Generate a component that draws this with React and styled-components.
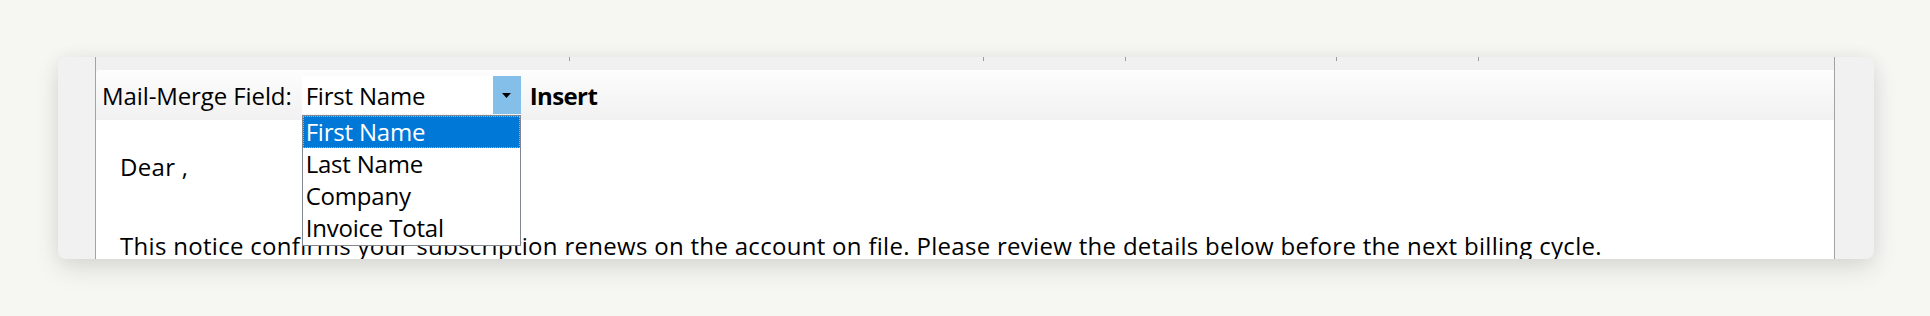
import React from "react";
import styled, { createGlobalStyle } from "styled-components";

const fields = ["First Name", "Last Name", "Company", "Invoice Total"];
const columns = [474, 414, 142, 211, 142];

function Arrow() {
  return (
    <svg width="9" height="5" viewBox="0 0 9 5">
      <path d="M0 0 H9 L4.5 5 Z" fill="#000" />
    </svg>
  );
}

function App() {
  return (
    <>
      <GlobalStyle />
      <Page>
        <Card>
          <Frame>
            <HeaderStrip>
              {columns.map((w, i) => (
                <Column key={i} $width={w} />
              ))}
            </HeaderStrip>
            <Toolbar>
              <Label>Mail-Merge Field:</Label>
              <Select>
                <SelectValue>First Name</SelectValue>
                <SelectButton>
                  <Arrow />
                </SelectButton>
                <List>
                  {fields.map((f, i) => (
                    <Option key={f} $active={i === 0}>
                      {f}
                    </Option>
                  ))}
                </List>
              </Select>
              <InsertButton>Insert</InsertButton>
            </Toolbar>
            <Letter>
              <Paragraph>Dear ,</Paragraph>
              <Paragraph>
                This notice confirms your subscription renews on the account on
                file. Please review the details below before the next billing
                cycle.
              </Paragraph>
            </Letter>
          </Frame>
        </Card>
      </Page>
    </>
  );
}

const GlobalStyle = createGlobalStyle`
  html, body {
    margin: 0;
    padding: 0;
    background: #f6f6f2;
  }
  #root {
    height: 316px;
    overflow: hidden;
  }
`;

const Page = styled.div`
  padding: 57px 56px 0 58px;
  font-family: "Open Sans", "Noto Sans", sans-serif;
  font-size: 24px;
  letter-spacing: 0.3px;
  color: #000;
`;

const Card = styled.div`
  height: 202px;
  display: flex;
  background: #f1f1f1;
  border-radius: 8px;
  padding: 0 39px 0 37px;
  overflow: hidden;
  box-shadow: 0 10px 26px rgba(0, 0, 0, 0.11), 0 0 18px rgba(0, 0, 0, 0.05);
`;

const Frame = styled.div`
  flex: 1;
  display: flex;
  flex-direction: column;
  border-left: 1px solid #a3a3a3;
  border-right: 1px solid #a3a3a3;
`;

const HeaderStrip = styled.div`
  height: 13px;
  flex: none;
  display: flex;
  background: #f0f0f0;
`;

const Column = styled.div`
  width: ${(p) => p.$width}px;
  position: relative;
  &::after {
    content: "";
    position: absolute;
    right: 0;
    top: -1px;
    width: 1px;
    height: 5px;
    background: #9c9c9c;
  }
`;

const Toolbar = styled.div`
  height: 50px;
  flex: none;
  display: flex;
  align-items: center;
  padding-left: 6px;
  background: linear-gradient(#fdfdfd, #f1f1f1);
  border-top-left-radius: 4px;
  position: relative;
  z-index: 2;
`;

const Label = styled.span`
  margin-right: 10px;
  white-space: nowrap;
  letter-spacing: -0.1px;
`;

const Select = styled.div`
  position: relative;
  width: 219px;
  height: 38px;
  display: flex;
  background: #fff;
  letter-spacing: -0.2px;
`;

const SelectValue = styled.div`
  flex: 1;
  display: flex;
  align-items: center;
  padding-left: 4px;
  white-space: nowrap;
`;

const SelectButton = styled.div`
  width: 28px;
  display: flex;
  align-items: center;
  justify-content: center;
  background: #84bfea;
`;

const List = styled.div`
  position: absolute;
  top: 39px;
  left: 0;
  width: 219px;
  box-sizing: border-box;
  border: 1px solid #828790;
  background: #fff;
  padding-bottom: 1px;
`;

const Option = styled.div`
  height: 32px;
  line-height: 32px;
  padding-left: 3px;
  white-space: nowrap;
  box-sizing: border-box;
  background: ${(p) => (p.$active ? "#0078d7" : "transparent")};
  color: ${(p) => (p.$active ? "#fff" : "#000")};
  outline: ${(p) => (p.$active ? "1px dotted #9fb4c8" : "none")};
  outline-offset: -1px;
`;

const InsertButton = styled.span`
  margin-left: 9px;
  font-weight: 700;
  letter-spacing: -0.6px;
`;

const Letter = styled.div`
  flex: 1;
  background: #fff;
  padding: 27px 0 0 24px;
  line-height: 39.5px;
  white-space: nowrap;
`;

const Paragraph = styled.p`
  margin: 0 0 39.5px;
`;

export default App;
